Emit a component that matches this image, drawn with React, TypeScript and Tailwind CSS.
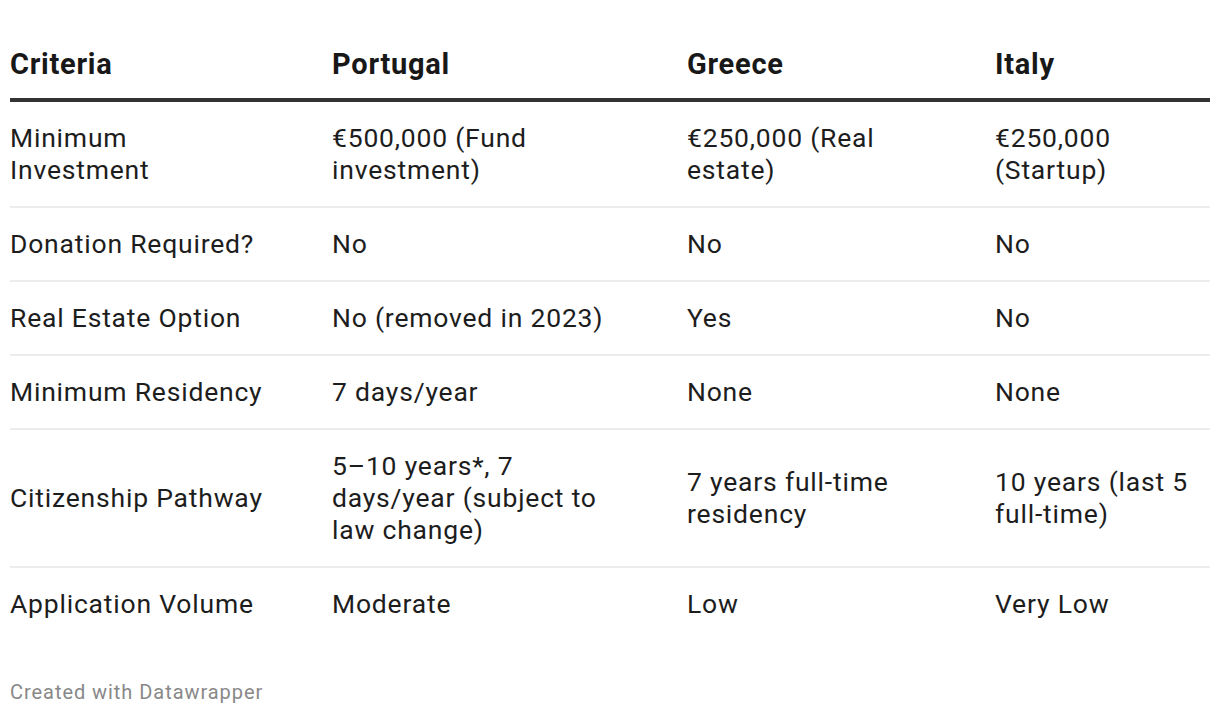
import React from 'react';

const rows: string[][] = [
    ['Minimum Investment', '€500,000 (Fund investment)', '€250,000 (Real estate)', '€250,000 (Startup)'],
    ['Donation Required?', 'No', 'No', 'No'],
    ['Real Estate Option', 'No (removed in 2023)', 'Yes', 'No'],
    ['Minimum Residency', '7 days/year', 'None', 'None'],
    ['Citizenship Pathway', '5–10 years*, 7 days/year (subject to law change)', '7 years full-time residency', '10 years (last 5 full-time)'],
    ['Application Volume', 'Moderate', 'Low', 'Very Low'],
];

const widths = ['max-w-[258px]', 'max-w-[285px]', 'max-w-[240px]', 'max-w-[210px]'];

export default function App() {
    return (
        <div className="w-[1220px] h-[716px] bg-white px-[10px] pt-[46px] font-['Roboto',sans-serif] text-[#1d1d1d]">
            {/* Header */}
            <div className="grid grid-cols-[322px_355px_308px_215px] border-b-4 border-[#333333] pb-[16px]">
                {['Criteria', 'Portugal', 'Greece', 'Italy'].map((h) => (
                    <div key={h} className="text-[29px] leading-[36px] font-bold tracking-[0.75px] text-[#181818]">{h}</div>
                ))}
            </div>

            {/* Body */}
            {rows.map((row, i) => (
                <div
                    key={row[0]}
                    className={`grid grid-cols-[322px_355px_308px_215px] items-center py-[20px] ${i < rows.length - 1 ? 'border-b-2 border-[#ececec]' : ''}`}
                >
                    {row.map((cell, j) => (
                        <div key={j} className={`text-[26.5px] leading-[32px] tracking-[0.8px] ${widths[j]}`}>{cell}</div>
                    ))}
                </div>
            ))}

            {/* Footer */}
            <div className="mt-[40px] text-[20px] leading-[24px] tracking-[0.95px] text-[#888888]">Created with Datawrapper</div>
        </div>
    );
}
